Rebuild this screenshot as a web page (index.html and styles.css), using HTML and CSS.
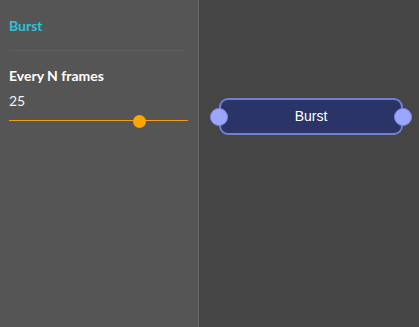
FILE: index.html
```html
<!DOCTYPE html>
<html>
<head>
<meta charset="utf-8">
<link rel="stylesheet" href="styles.css">
</head>
<body>
<div class="app">
  <aside class="sidebar">
    <div class="title">Burst</div>
    <div class="divider"></div>
    <div class="label">Every N frames</div>
    <div class="value">25</div>
    <div class="slider">
      <div class="track"></div>
      <div class="thumb" style="left: 124px"></div>
    </div>
  </aside>
  <main class="canvas">
    <div class="node">
      <span class="port port-in"></span>
      <span class="node-label">Burst</span>
      <span class="port port-out"></span>
    </div>
  </main>
</div>
</body>
</html>
```
FILE: styles.css
```css
* { box-sizing: border-box; }
html, body { margin: 0; padding: 0; }
body {
  width: 419px;
  height: 327px;
  overflow: hidden;
  font-family: Lato, "Liberation Sans", sans-serif;
}
.app {
  display: flex;
  width: 419px;
  height: 327px;
}
.sidebar {
  width: 199px;
  height: 100%;
  background: #555555;
  border-right: 1px solid #666666;
  padding: 17px 10px 0 9px;
  display: flex;
  flex-direction: column;
}
.title {
  color: #2ac3dc;
  font-weight: 700;
  font-size: 14px;
  line-height: 18px;
}
.divider {
  height: 1px;
  background: #5e5e5e;
  margin: 15px 2px 0 0;
}
.label {
  color: #ffffff;
  font-weight: 700;
  font-size: 14px;
  line-height: 18px;
  margin-top: 16px;
}
.value {
  color: #f2f2f2;
  font-size: 14px;
  line-height: 18px;
  margin-top: 7px;
}
.slider {
  position: relative;
  height: 15px;
  margin-top: 4px;
  width: 179px;
  flex: 0 0 15px;
}
.track {
  position: absolute;
  left: 0;
  right: 0;
  top: 6px;
  height: 0;
  border-top: 1px solid #eba21a;
}
.thumb {
  position: absolute;
  top: 1px;
  width: 13px;
  height: 13px;
  border-radius: 50%;
  background: #ffa500;
}
.canvas {
  flex: 1;
  background: #454545;
  padding: 98px 0 0 20px;
}
.node {
  position: relative;
  width: 184px;
  height: 37px;
  background: #2a3467;
  border: 2px solid #6f7fd2;
  border-radius: 9px;
  display: flex;
  align-items: center;
  justify-content: center;
}
.node-label {
  color: #ffffff;
  font-family: "Liberation Sans", Arial, sans-serif;
  font-size: 14px;
  margin-top: -1px;
}
.port {
  position: absolute;
  top: 50%;
  width: 18px;
  height: 18px;
  margin-top: -9px;
  border-radius: 50%;
  background: #9aa6ff;
  border: 1px solid #7b88e0;
}
.port-in { left: -11px; }
.port-out { right: -11px; }
```
